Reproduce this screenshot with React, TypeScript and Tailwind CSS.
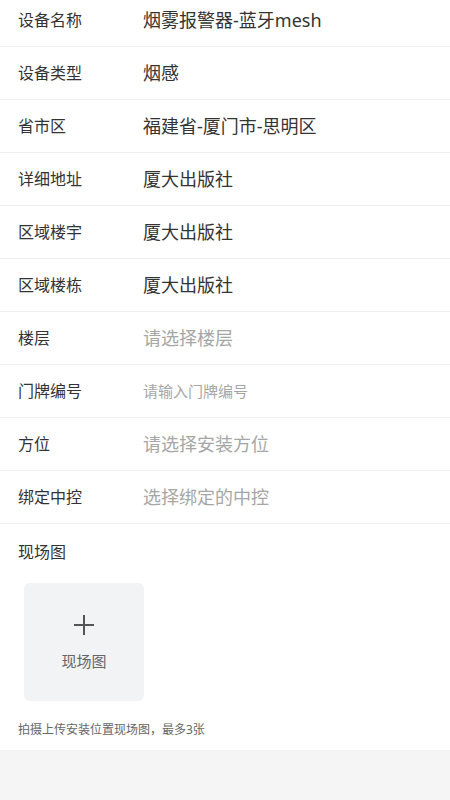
import React from "react";

type Row = { label: string; value: string; kind: "value" | "ph" | "phs" };

const rows: Row[] = [
  { label: "设备名称", value: "烟雾报警器-蓝牙mesh", kind: "value" },
  { label: "设备类型", value: "烟感", kind: "value" },
  { label: "省市区", value: "福建省-厦门市-思明区", kind: "value" },
  { label: "详细地址", value: "厦大出版社", kind: "value" },
  { label: "区域楼宇", value: "厦大出版社", kind: "value" },
  { label: "区域楼栋", value: "厦大出版社", kind: "value" },
  { label: "楼层", value: "请选择楼层", kind: "ph" },
  { label: "门牌编号", value: "请输入门牌编号", kind: "phs" },
  { label: "方位", value: "请选择安装方位", kind: "ph" },
  { label: "绑定中控", value: "选择绑定的中控", kind: "ph" },
];

export default function App() {
  return (
    <div
      className="w-[450px] h-[800px] overflow-hidden bg-[#f5f5f5]"
      style={{ fontFamily: '"Noto Sans", "Noto Sans CJK SC", sans-serif' }}
    >
      <div className="bg-white -mt-[6px]">
        {rows.map((r) => (
          <div
            key={r.label}
            className="h-[53px] border-b border-[#efefef] flex items-center"
          >
            <div className="w-[143px] shrink-0 pl-[18px] text-[16px] text-[#333]">{r.label}</div>
            <div
              className={
                r.kind === "value"
                  ? "text-[18px] text-[#333]"
                  : r.kind === "ph"
                  ? "text-[18px] text-[#a6a6a6]"
                  : "text-[15px] text-[#a6a6a6]"
              }
            >
              {r.value}
            </div>
          </div>
        ))}
        <div className="pt-[16px] pb-[12px]">
          <div className="pl-[18px] text-[16px] leading-[24px] text-[#333]">现场图</div>
          <div className="mt-[19px] ml-[24px] w-[120px] h-[118px] rounded-[6px] bg-[#f2f3f5] flex flex-col items-center pt-[31px]">
            <svg width="22" height="22" viewBox="0 0 22 22">
              <path d="M11 1V21M1 11H21" stroke="#555" strokeWidth="2" fill="none" />
            </svg>
            <div className="mt-[15px] text-[15px] leading-[20px] text-[#666]">现场图</div>
          </div>
          <div className="mt-[21px] pl-[18px] text-[12px] leading-[16px] text-[#666]">
            拍摄上传安装位置现场图，最多3张
          </div>
        </div>
      </div>
    </div>
  );
}
